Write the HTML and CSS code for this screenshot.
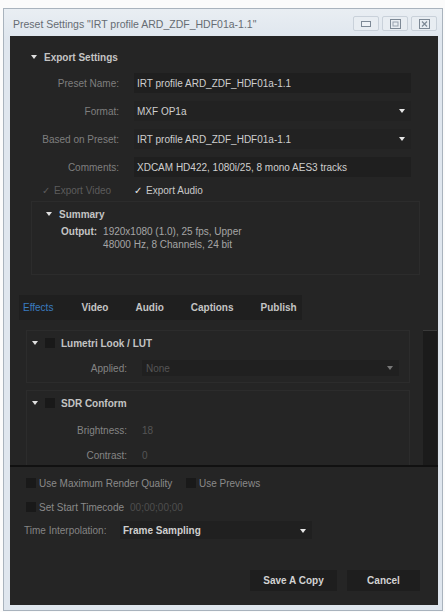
FILE: index.html
```html
<!DOCTYPE html>
<html lang="en">
<head>
    <meta charset="UTF-8">
    <meta name="viewport" content="width=device-width, initial-scale=1.0">
    <title>Preset Settings</title>
    <link rel="stylesheet" href="styles.css">
</head>
<body>
    <div class="window">
        <div class="titlebar">
            <span class="title">Preset Settings "IRT profile ARD_ZDF_HDF01a-1.1"</span>
            <div class="win-buttons">
                <span class="wbtn">
                    <svg width="10" height="6" viewBox="0 0 10 6"><rect x="0.5" y="0.5" width="9" height="5" fill="#eef2f6" stroke="#7d8996"/></svg>
                </span>
                <span class="wbtn">
                    <svg width="11" height="10" viewBox="0 0 11 10"><rect x="0.5" y="0.5" width="10" height="9" fill="none" stroke="#7d8996"/><rect x="3" y="3" width="5" height="4" fill="none" stroke="#97a2ae"/></svg>
                </span>
                <span class="wbtn">
                    <svg width="11" height="10" viewBox="0 0 11 10"><rect x="0.5" y="0.5" width="10" height="9" fill="none" stroke="#7d8996"/><path d="M3 2.5 L8 7.5 M8 2.5 L3 7.5" stroke="#7d8996" stroke-width="1.2"/></svg>
                </span>
            </div>
        </div>

        <div class="content">
            <section class="export">
                <div class="section-head">
                    <span class="tri"></span>Export Settings
                </div>

                <div class="form">
                    <div class="row">
                        <label>Preset Name:</label>
                        <div class="field">IRT profile ARD_ZDF_HDF01a-1.1</div>
                    </div>
                    <div class="row">
                        <label>Format:</label>
                        <div class="field select">MXF OP1a<span class="arrow"></span></div>
                    </div>
                    <div class="row">
                        <label>Based on Preset:</label>
                        <div class="field select">IRT profile ARD_ZDF_HDF01a-1.1<span class="arrow"></span></div>
                    </div>
                    <div class="row">
                        <label>Comments:</label>
                        <div class="field">XDCAM HD422, 1080i/25, 8 mono AES3 tracks</div>
                    </div>
                </div>

                <div class="export-checks">
                    <span class="tick dim">&#10003;</span><span class="dim">Export Video</span>
                    <span class="tick audio">&#10003;</span><span>Export Audio</span>
                </div>

                <div class="summary">
                    <div class="summary-head"><span class="tri"></span>Summary</div>
                    <div class="output">
                        <b>Output:</b>
                        <div class="output-lines">
                            <span>1920x1080 (1.0), 25 fps, Upper</span>
                            <span>48000 Hz, 8 Channels, 24 bit</span>
                        </div>
                    </div>
                </div>
            </section>

            <div class="tabs">
                <span class="tab active">Effects</span>
                <span class="tab">Video</span>
                <span class="tab">Audio</span>
                <span class="tab">Captions</span>
                <span class="tab">Publish</span>
            </div>

            <div class="effects">
                <div class="effects-list">
                    <div class="group">
                        <div class="group-head"><span class="tri"></span><span class="box"></span>Lumetri Look / LUT</div>
                        <div class="group-row">
                            <label>Applied:</label>
                            <div class="fx-select">None<span class="arrow"></span></div>
                        </div>
                    </div>
                    <div class="group sdr">
                        <div class="group-head"><span class="tri"></span><span class="box"></span>SDR Conform</div>
                        <div class="group-row">
                            <label>Brightness:</label>
                            <span class="val">18</span>
                        </div>
                        <div class="group-row">
                            <label>Contrast:</label>
                            <span class="val">0</span>
                        </div>
                    </div>
                </div>
                <div class="scrollbar"></div>
            </div>

            <div class="options">
                <div class="opt-row">
                    <span class="box"></span><span class="wide">Use Maximum Render Quality</span>
                    <span class="box"></span><span>Use Previews</span>
                </div>
                <div class="opt-row">
                    <span class="box"></span><span>Set Start Timecode</span>
                    <span class="timecode">00;00;00;00</span>
                </div>
                <div class="interp-row">
                    <label>Time Interpolation:</label>
                    <div class="interp-select">Frame Sampling<span class="arrow"></span></div>
                </div>
            </div>

            <div class="actions">
                <button class="btn save">Save A Copy</button>
                <button class="btn cancel">Cancel</button>
            </div>
        </div>
    </div>
</body>
</html>
```

FILE: styles.css
```css
* {
    box-sizing: border-box;
}

body {
    margin: 0;
    background: #fbfbfb;
    font-family: "Liberation Sans", Arial, sans-serif;
    font-size: 10px;
}

.window {
    margin: 8px 2px 0 3px;
    height: 603px;
    border: 1px solid #a9b3bd;
    background: linear-gradient(#e9eef3, #dfe6ee 30px, #dfe6ee);
    display: flex;
    flex-direction: column;
    padding-bottom: 5px;
}

/* title bar */

.titlebar {
    height: 27px;
    display: flex;
    align-items: center;
    justify-content: space-between;
    padding: 0 5px 0 9px;
}

.title {
    color: #666c73;
    font-size: 10.5px;
    margin-top: 2px;
}

.win-buttons {
    display: flex;
    gap: 3px;
    margin-top: 2px;
}

.wbtn {
    width: 26px;
    height: 15px;
    border: 1px solid #c9d1da;
    border-radius: 2px;
    background: #e8edf2;
    display: flex;
    align-items: center;
    justify-content: center;
}

/* dark content */

.content {
    flex: 1;
    margin: 0 4px 0 6px;
    background: #252525;
    color: #c9c9c9;
    display: flex;
    flex-direction: column;
}

.tri {
    width: 0;
    height: 0;
    border-left: 3.5px solid transparent;
    border-right: 3.5px solid transparent;
    border-top: 4px solid #e0e0e0;
    display: inline-block;
}

.export {
    padding: 14px 0 0 21px;
}

.section-head {
    height: 14px;
    display: flex;
    align-items: center;
    gap: 7px;
    font-weight: bold;
    color: #c4c4c4;
}

.form {
    margin-top: 9px;
    display: flex;
    flex-direction: column;
    gap: 8px;
}

.row {
    display: flex;
    align-items: center;
    height: 20px;
}

.row label {
    width: 88px;
    text-align: right;
    color: #7f7f7f;
}

.field {
    margin-left: 15px;
    width: 277px;
    height: 20px;
    background: #1f1f1f;
    display: flex;
    align-items: center;
    padding-left: 3px;
    color: #cfcfcf;
    position: relative;
}

.select {
    background: #222;
}

.arrow {
    position: absolute;
    right: 6px;
    top: 8px;
    border-left: 3.5px solid transparent;
    border-right: 3.5px solid transparent;
    border-top: 4px solid #e6e6e6;
}

.export-checks {
    margin-top: 6px;
    height: 14px;
    display: flex;
    align-items: center;
    padding-left: 11px;
}

.tick {
    font-size: 10px;
    margin-right: 4px;
    color: #e8e8e8;
}

.tick.audio {
    margin-left: 23px;
}

.dim {
    color: #5c5c5c;
}

.summary {
    margin: 4px 18px 0 0;
    height: 74px;
    border: 1px solid #2c2c2c;
    padding: 5px 0 0 14px;
}

.summary-head {
    height: 14px;
    display: flex;
    align-items: center;
    gap: 7px;
    font-weight: bold;
    color: #c4c4c4;
}

.output {
    margin: 4px 0 0 15px;
    display: flex;
    gap: 6px;
    color: #a5a5a5;
    line-height: 13px;
}

.output b {
    color: #c4c4c4;
}

.output-lines {
    display: flex;
    flex-direction: column;
}

/* tabs */

.tabs {
    margin: 20px 0 0 9px;
    width: 283px;
    height: 25px;
    background: #1f1f1f;
    display: flex;
    align-items: center;
    gap: 27px;
    padding-left: 4px;
    font-weight: bold;
    color: #c4c4c4;
}

.tab.active {
    color: #3a7cc0;
    font-weight: normal;
}

.tabs .tab:nth-child(2) {
    margin-left: 1px;
}

/* effects panel */

.effects {
    height: 147px;
    display: flex;
    border-bottom: 2px solid #111;
    overflow: hidden;
}

.effects-list {
    flex: 1;
    padding: 10px 13px 0 16px;
    display: flex;
    flex-direction: column;
    gap: 7px;
}

.group {
    border: 1px solid #2c2c2c;
    padding: 5px 0 6px 5px;
}

.group-head {
    height: 14px;
    display: flex;
    align-items: center;
    font-weight: bold;
    color: #c4c4c4;
}

.group-head .tri {
    margin-right: 7px;
}

.box {
    width: 10px;
    height: 10px;
    background: #191919;
    display: inline-block;
    margin-right: 6px;
}

.group-row {
    display: flex;
    align-items: center;
    height: 16px;
    margin-top: 10px;
}

.sdr .group-row {
    margin-top: 12px;
}

.sdr .group-row + .group-row {
    margin-top: 9px;
}

.group-row label {
    width: 95px;
    text-align: right;
    color: #848484;
}

.fx-select {
    margin-left: 15px;
    width: 257px;
    height: 16px;
    background: #202020;
    color: #555;
    display: flex;
    align-items: center;
    padding-left: 4px;
    position: relative;
}

.fx-select .arrow {
    top: 6px;
    border-top-color: #777;
}

.val {
    margin-left: 15px;
    color: #555;
}

.scrollbar {
    width: 14px;
    margin: 10px 1px 0 0;
    background: #1b1b1b;
    border-top: 1px solid #3a3a3a;
}

/* bottom options */

.options {
    padding: 9px 0 0 16px;
}

.opt-row {
    height: 14px;
    display: flex;
    align-items: center;
    color: #8a8a8a;
    margin-bottom: 10px;
}

.opt-row .box {
    margin-right: 3px;
}

.opt-row .wide {
    width: 147px;
}

.timecode {
    margin-left: 6px;
    color: #4e4e4e;
}

.interp-row {
    display: flex;
    align-items: center;
    margin: -3px 0 0 -2px;
    height: 18px;
}

.interp-row label {
    width: 96px;
    color: #848484;
}

.interp-select {
    width: 192px;
    height: 18px;
    background: #202020;
    display: flex;
    align-items: center;
    padding-left: 3px;
    color: #cfcfcf;
    font-weight: bold;
    position: relative;
}

/* buttons */

.actions {
    margin-top: 31px;
    display: flex;
    justify-content: flex-end;
    gap: 10px;
    padding-right: 18px;
}

.btn {
    height: 21px;
    border: none;
    background: #1e1e1e;
    color: #d2d2d2;
    font-family: inherit;
    font-size: 10px;
    font-weight: bold;
}

.btn.save {
    width: 87px;
}

.btn.cancel {
    width: 73px;
}
```
